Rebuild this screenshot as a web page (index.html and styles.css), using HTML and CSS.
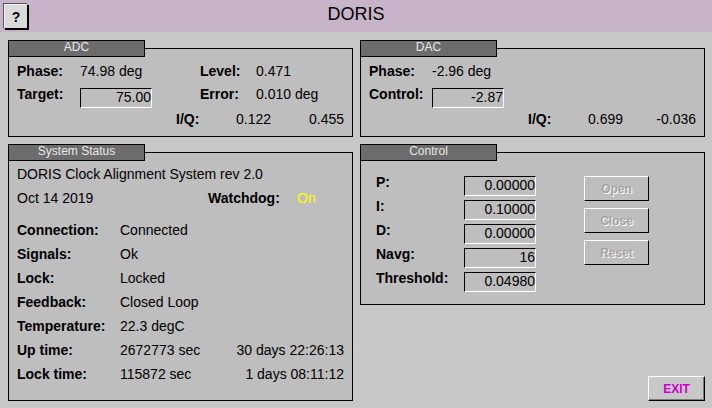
FILE: index.html
```html
<!DOCTYPE html>
<html lang="en">
<head>
<meta charset="utf-8">
<title>DORIS</title>
<link rel="stylesheet" href="styles.css">
</head>
<body>
<header class="titlebar">
  <div class="titlebar-left"><button class="help" type="button">?</button></div>
  <h1 class="title">DORIS</h1>
  <div></div>
</header>
<main class="panels">
  <section class="panel">
    <div class="tab">ADC</div>
    <div class="frame frame-io">
      <div class="io-row r1">
        <span class="lbl c-label">Phase:</span>
        <span class="c-value">74.98 deg</span>
        <span class="lbl c-label2">Level:</span>
        <span>0.471</span>
      </div>
      <div class="io-row r2">
        <span class="lbl c-label">Target:</span>
        <div class="c-value"><div class="field field-io">75.00</div></div>
        <span class="lbl c-label2">Error:</span>
        <span>0.010 deg</span>
      </div>
      <div class="io-row r3">
        <span class="lbl c-iq">I/Q:</span>
        <span>0.122</span>
        <span class="c-end">0.455</span>
      </div>
    </div>
  </section>
  <section class="panel">
    <div class="tab">DAC</div>
    <div class="frame frame-io">
      <div class="io-row r1">
        <span class="lbl c-label">Phase:</span>
        <span class="c-value">-2.96 deg</span>
      </div>
      <div class="io-row r2">
        <span class="lbl c-label">Control:</span>
        <div class="c-value"><div class="field field-io">-2.87</div></div>
      </div>
      <div class="io-row r3">
        <span class="lbl c-iq">I/Q:</span>
        <span>0.699</span>
        <span class="c-end">-0.036</span>
      </div>
    </div>
  </section>
  <section class="panel">
    <div class="tab">System Status</div>
    <div class="frame frame-status">
      <div class="st-row">DORIS Clock Alignment System rev 2.0</div>
      <div class="st-row">
        <span class="st-date">Oct 14 2019</span>
        <span class="lbl st-wd">Watchdog:</span>
        <span class="on">On</span>
      </div>
      <div class="st-row st-gap"><span class="lbl st-label">Connection:</span><span>Connected</span></div>
      <div class="st-row"><span class="lbl st-label">Signals:</span><span>Ok</span></div>
      <div class="st-row"><span class="lbl st-label">Lock:</span><span>Locked</span></div>
      <div class="st-row"><span class="lbl st-label">Feedback:</span><span>Closed Loop</span></div>
      <div class="st-row"><span class="lbl st-label">Temperature:</span><span>22.3 degC</span></div>
      <div class="st-row"><span class="lbl st-label">Up time:</span><span>2672773 sec</span><span class="st-end">30 days 22:26:13</span></div>
      <div class="st-row"><span class="lbl st-label">Lock time:</span><span>115872 sec</span><span class="st-end">1 days 08:11:12</span></div>
    </div>
  </section>
  <div class="right-col">
    <section class="panel">
      <div class="tab">Control</div>
      <div class="frame frame-control">
        <div class="ctl-grid">
          <span class="lbl ctl-label">P:</span><div class="field">0.00000</div>
          <span class="lbl ctl-label">I:</span><div class="field">0.10000</div>
          <span class="lbl ctl-label">D:</span><div class="field">0.00000</div>
          <span class="lbl ctl-label">Navg:</span><div class="field">16</div>
          <span class="lbl ctl-label">Threshold:</span><div class="field">0.04980</div>
        </div>
        <div class="ctl-buttons">
          <button class="btn" type="button" disabled>Open</button>
          <button class="btn" type="button" disabled>Close</button>
          <button class="btn" type="button" disabled>Reset</button>
        </div>
      </div>
    </section>
    <button class="exit" type="button">EXIT</button>
  </div>
</main>
</body>
</html>
```
FILE: styles.css
```css
html, body {
  margin: 0;
}
body {
  width: 712px;
  height: 408px;
  overflow: hidden;
  background: #c8c8c8;
  font-family: "Liberation Sans", Arial, sans-serif;
  font-size: 14px;
  color: #000;
}

/* title bar */
.titlebar {
  display: grid;
  grid-template-columns: 1fr auto 1fr;
  height: 32px;
  background: #c8b4c8;
}
.help {
  box-sizing: border-box;
  width: 24px;
  height: 25px;
  margin: 4px 0 0 4px;
  padding: 0;
  background: #dadada;
  border: 1px solid;
  border-color: #f2f2f2 #000 #000 #f2f2f2;
  box-shadow: 1px 1px 0 #000, -1px -1px 0 #555;
  font-family: "Liberation Sans", Arial, sans-serif;
  font-weight: bold;
  font-size: 14px;
  line-height: 1;
  color: #000;
}
.title {
  margin: 0;
  font-size: 18px;
  font-weight: normal;
  line-height: 28px;
}

/* panel grid */
.panels {
  display: grid;
  grid-template-columns: 345px 345px;
  column-gap: 7px;
  row-gap: 7px;
  padding: 8px 0 0 8px;
}
.panel {
  display: flex;
  flex-direction: column;
}
.tab {
  position: relative;
  z-index: 1;
  box-sizing: border-box;
  width: 137px;
  height: 17px;
  margin-bottom: -9px;
  border: 1px solid #000;
  background: #6c6c6c;
  color: #e8e8e8;
  font-size: 12px;
  line-height: 12px;
  text-align: center;
}
.frame {
  box-sizing: border-box;
  border: 1px solid #000;
  background: #bebebe;
}
.lbl {
  font-weight: bold;
}

/* ADC / DAC */
.frame-io {
  height: 89px;
  padding: 11px 8px 0 8px;
}
.io-row {
  display: flex;
  align-items: flex-start;
  white-space: nowrap;
}
.io-row.r1 { height: 22px; line-height: 22px; }
.io-row.r2 { height: 24px; line-height: 24px; }
.io-row.r3 { height: 26px; line-height: 26px; }
.c-label { width: 63px; }
.c-value { width: 120px; }
.c-label2 { width: 56px; }
.c-iq { width: 60px; margin-left: 159px; }
.c-end { flex: 1; text-align: right; }

.field {
  box-sizing: border-box;
  width: 72px;
  height: 20px;
  padding: 0 0 2px 0;
  border: 1px solid;
  border-color: #000 #fff #fff #000;
  line-height: 16px;
  text-align: right;
  font-weight: normal;
}
.field-io {
  margin-top: 6px;
}

/* System status */
.frame-status {
  height: 249px;
  padding: 9px 8px 0 8px;
}
.st-row {
  display: flex;
  height: 24px;
  line-height: 24px;
  white-space: nowrap;
}
.st-gap { margin-top: 8px; }
.st-label { width: 103px; }
.st-date { width: 191px; }
.st-wd { width: 89px; }
.on { color: #ffff00; }
.st-end { flex: 1; text-align: right; }

/* Control */
.right-col {
  display: flex;
  flex-direction: column;
}
.frame-control {
  display: flex;
  align-items: flex-start;
  height: 153px;
  padding: 23px 8px 0 15px;
}
.ctl-grid {
  display: grid;
  grid-template-columns: 88px 72px;
  grid-auto-rows: 24px;
}
.ctl-label {
  line-height: 12px;
}
.ctl-buttons {
  display: flex;
  flex-direction: column;
  gap: 7px;
  margin-left: 48px;
}
.btn {
  box-sizing: border-box;
  width: 65px;
  height: 25px;
  padding: 0;
  background: #bebebe;
  border: 1px solid;
  border-color: #fff #000 #000 #fff;
  font-family: "Liberation Sans", Arial, sans-serif;
  font-weight: bold;
  font-size: 12px;
  color: #a4a4a4;
  text-shadow: 1px 1px 0 #fff;
}
.exit {
  box-sizing: border-box;
  align-self: flex-end;
  margin-top: auto;
  width: 57px;
  height: 25px;
  padding: 0;
  background: #c8c8c8;
  border: 1px solid;
  border-color: #fff #000 #000 #fff;
  box-shadow: inset -1px -1px 0 #7a7a7a;
  font-family: "Liberation Sans", Arial, sans-serif;
  font-weight: bold;
  font-size: 12px;
  color: #cc00cc;
}
```
